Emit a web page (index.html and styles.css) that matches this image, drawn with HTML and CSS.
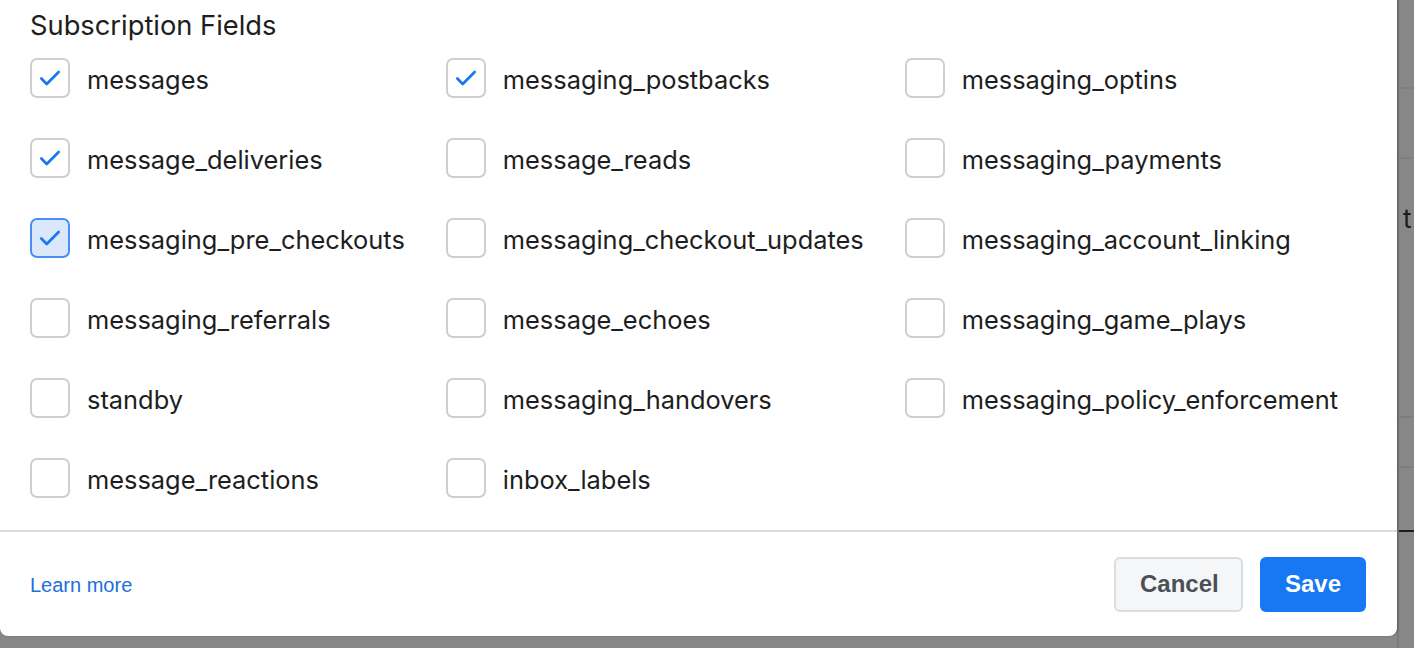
FILE: index.html
```html
<!DOCTYPE html>
<html>
<head>
    <title>Subscription Fields</title>
    <link rel="stylesheet" href="styles.css">
</head>
<body>
    <div class="modal">
        <div class="modal-body">
            <h2 class="title">Subscription Fields</h2>
            <div class="fields">
                <label class="field"><span class="box checked"></span>messages</label>
                <label class="field"><span class="box checked"></span>messaging_postbacks</label>
                <label class="field"><span class="box"></span>messaging_optins</label>
                <label class="field"><span class="box checked"></span>message_deliveries</label>
                <label class="field"><span class="box"></span>message_reads</label>
                <label class="field"><span class="box"></span>messaging_payments</label>
                <label class="field"><span class="box checked focused"></span>messaging_pre_checkouts</label>
                <label class="field"><span class="box"></span>messaging_checkout_updates</label>
                <label class="field"><span class="box"></span>messaging_account_linking</label>
                <label class="field"><span class="box"></span>messaging_referrals</label>
                <label class="field"><span class="box"></span>message_echoes</label>
                <label class="field"><span class="box"></span>messaging_game_plays</label>
                <label class="field"><span class="box"></span>standby</label>
                <label class="field"><span class="box"></span>messaging_handovers</label>
                <label class="field"><span class="box"></span>messaging_policy_enforcement</label>
                <label class="field"><span class="box"></span>message_reactions</label>
                <label class="field"><span class="box"></span>inbox_labels</label>
            </div>
        </div>
        <div class="modal-footer">
            <a class="learn" href="#">Learn more</a>
            <div class="actions">
                <button class="btn cancel">Cancel</button>
                <button class="btn save">Save</button>
            </div>
        </div>
    </div>
    <div class="behind">
        <div class="row r1"></div>
        <div class="row r2"></div>
        <div class="row r3"><span class="peek">t</span></div>
        <div class="row r4"></div>
        <div class="row r5"></div>
        <div class="row r6"></div>
    </div>

    <script>
        document.querySelectorAll('.box.checked').forEach(function (box) {
            box.innerHTML = '<svg width="26" height="26" viewBox="0 0 24 24"><path d="M4 12.5l5 5L20 6.5" fill="none" stroke="#1877f2" stroke-width="2.5" stroke-linecap="round" stroke-linejoin="round"/></svg>';
        });
    </script>
</body>
</html>
```

FILE: styles.css
```css
html, body { margin: 0; height: 648px; overflow: hidden; }
body { display: flex; align-items: flex-start; background: #878787; font-family: Inter, "Noto Sans", sans-serif; color: #1c1e21; }

.modal { width: 1397px; height: 636px; flex: none; background: #fff; border-radius: 0 0 8px 8px; display: flex; flex-direction: column; box-shadow: 1px 0 2px rgba(0,0,0,0.25); position: relative; z-index: 1; }
.modal-body { flex: 1; padding: 10px 30px 0; border-bottom: 2px solid #dadde1; }
.title { margin: 0 0 16px; font-size: 27.3px; font-weight: 400; line-height: 32px; }

.fields { display: grid; grid-template-columns: auto auto auto; justify-content: start; column-gap: 41px; row-gap: 40px; }
.field { box-sizing: border-box; display: flex; align-items: center; gap: 17px; font-size: 25.4px; height: 40px; white-space: nowrap; padding-top: 2px; }
.box { width: 36px; height: 36px; margin-top: -2px; border: 2px solid #ccd0d5; border-radius: 7px; display: flex; align-items: center; justify-content: center; background: #fff; }
.box.focused { border-color: #4b8ef2; background: #dbe7fb; }

.modal-footer { height: 104px; padding: 0 31px 0 30px; display: flex; align-items: center; justify-content: space-between; }
.learn { font-family: "Liberation Sans", Arial, sans-serif; font-size: 20px; color: #216fdb; text-decoration: none; margin-top: 3px; }
.actions { display: flex; gap: 17px; }
.btn { height: 55px; font-family: "Liberation Sans", Arial, sans-serif; font-size: 24px; font-weight: bold; border-radius: 6px; padding: 0 24px; cursor: pointer; }
.cancel { background: #f5f6f7; border: 2px solid #dadde1; color: #4b4f56; width: 129px; }
.save { background: #1877f2; border: none; color: #fff; width: 106px; }

.behind { flex: 1; height: 648px; display: flex; flex-direction: column; border-left: 2px solid #7a7a7a; }
.row { border-bottom: 2px solid #7e7e7e; flex: none; }
.r1 { height: 87px; }
.r2 { height: 68px; }
.r3 { height: 257px; }
.r4 { height: 48px; }
.r5 { height: 62px; border-bottom-color: #1e1e1e; }
.r6 { height: 94px; border-bottom: none; }
.peek { display: block; margin: 44px 0 0 4px; font-size: 26px; color: #1a1a1a; }
```
